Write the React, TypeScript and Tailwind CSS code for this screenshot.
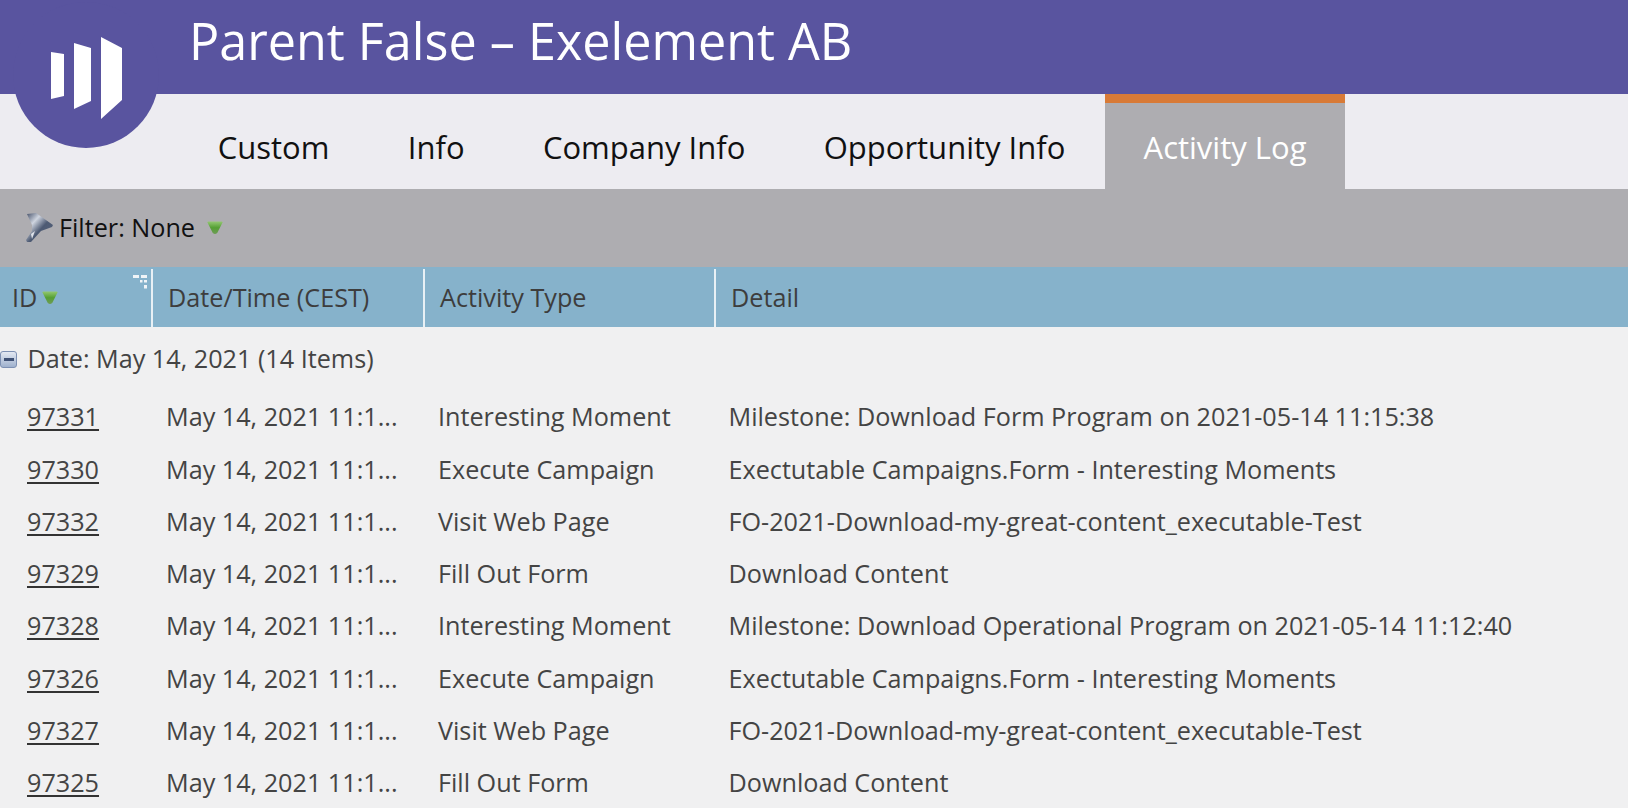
const FONT = "font-['Open_Sans','Noto_Sans',sans-serif]";

type Row = { id: string; type: string; detail: string };

const ROWS: Row[] = [
  { id: "97331", type: "Interesting Moment", detail: "Milestone: Download Form Program on 2021-05-14 11:15:38" },
  { id: "97330", type: "Execute Campaign", detail: "Exectutable Campaigns.Form - Interesting Moments" },
  { id: "97332", type: "Visit Web Page", detail: "FO-2021-Download-my-great-content_executable-Test" },
  { id: "97329", type: "Fill Out Form", detail: "Download Content" },
  { id: "97328", type: "Interesting Moment", detail: "Milestone: Download Operational Program on 2021-05-14 11:12:40" },
  { id: "97326", type: "Execute Campaign", detail: "Exectutable Campaigns.Form - Interesting Moments" },
  { id: "97327", type: "Visit Web Page", detail: "FO-2021-Download-my-great-content_executable-Test" },
  { id: "97325", type: "Fill Out Form", detail: "Download Content" },
];

const TABS = ["Custom", "Info", "Company Info", "Opportunity Info"];

function GreenArrow({ id }: { id: string }) {
  return (
    <svg width="16" height="14" viewBox="0 0 16 14">
      <defs>
        <linearGradient id={id} x1="0" y1="0" x2="0" y2="1">
          <stop offset="0" stopColor="#94c873" />
          <stop offset="0.5" stopColor="#549f33" />
          <stop offset="1" stopColor="#6f9c58" />
        </linearGradient>
      </defs>
      <path d="M0.500 1.500Q0.500 0.500 1.500 0.500H14.500Q15.500 0.500 15.500 1.500L10.500 11.500Q8 14.500 5.500 11.500z" fill={`url(#${id})`} />
    </svg>
  );
}

export default function App() {
  return (
    <div className={`${FONT} h-[808px] w-[1628px] overflow-hidden bg-[#f0f0f1]`}>
      {/* Header */}
      <div className="relative h-[94px] bg-[#59549f] pl-[189px]">
        <h1 className="pt-[5px] text-[50.3px] leading-[72px] text-white">Parent False – Exelement AB</h1>
        <div className="absolute left-[13px] top-[2px] h-[146px] w-[146px] rounded-full bg-[#59549f]">
          <svg className="absolute left-[38px] top-[35px]" width="72" height="83" viewBox="0 0 72 83">
            <path d="M0 15l13 2v42l-13 3z M23 6l17 5v53l-17 8z M50 0l21 11v52l-21 19z" fill="#fff" />
          </svg>
        </div>
      </div>

      {/* Tabs */}
      <div className="flex h-[95px] bg-[#edecf1] pl-[178.500px]">
        {TABS.map((t) => (
          <div key={t} className="flex items-center px-[39.200px] pt-[11px] text-[31px] text-[#111]">
            {t}
          </div>
        ))}
        <div className="flex items-center border-t-[9px] border-[#d87a37] bg-[#aeadb1] px-[39px] pt-[2px] text-[31px] text-white">
          Activity Log
        </div>
      </div>

      {/* Filter bar */}
      <div className="flex h-[78px] items-center bg-[#aeadb1] pl-[25px] text-[25.200px] text-[#111]">
        <svg width="30" height="32" viewBox="0 0 30 32">
          <defs>
            <linearGradient id="funnel" x1="0" y1="0" x2="1" y2="1">
              <stop offset="0" stopColor="#3f4a63" />
              <stop offset="0.3" stopColor="#cfd5e0" />
              <stop offset="0.55" stopColor="#4d5a73" />
              <stop offset="1" stopColor="#59657c" />
            </linearGradient>
          </defs>
          <path d="M2 2l9 -1 17 12 -1 2 -11 4 -10 11 -4 0 -1 -2 6 -9 0 -6z" fill="url(#funnel)" />
          <path d="M6 22l4 -3 -3 8z" fill="#dfe3ea" />
        </svg>
        <span className="ml-[4px]">Filter: None</span>
        <span className="ml-[12px] flex">
          <GreenArrow id="arrow-filter" />
        </span>
      </div>

      {/* Table header */}
      <div className="flex h-[60px] items-end bg-[#86b2cb] text-[25.200px] text-[#3d3d3d]">
        <div className="relative flex h-[58px] w-[153px] items-center border-r-2 border-[#e8f0f5] pl-[12px]">
          ID
          <span className="ml-[5px] flex">
            <GreenArrow id="arrow-id" />
          </span>
          <svg className="absolute left-[132px] top-[4px]" width="16" height="17" viewBox="0 0 16 17" fill="#f0f4f7">
            <path d="M1 2h6v3H1z M9 2h6v3H9z M8 7h2.500v2.500H8z M12 7h3v2.500h-3z M12 12h3v3.500h-3z" />
          </svg>
        </div>
        <div className="flex h-[58px] w-[271.500px] items-center border-r-2 border-[#e8f0f5] pl-[15px]">Date/Time (CEST)</div>
        <div className="flex h-[58px] w-[291px] items-center border-r-2 border-[#e8f0f5] pl-[15.500px]">Activity Type</div>
        <div className="flex h-[58px] items-center pl-[15.500px]">Detail</div>
      </div>

      {/* Group */}
      <div className="flex h-[64px] items-center text-[25.200px] text-[#444]">
        <span className="mr-[10.500px] flex h-[17px] w-[17px] items-center justify-center rounded-[3px] border border-[#7d90b3] bg-gradient-to-b from-[#e4e9f2] to-[#9fb1cd]">
          <span className="h-[3px] w-[10px] bg-[#3f5175]" />
        </span>
        Date: May 14, 2021 (14 Items)
      </div>

      {/* Rows */}
      {ROWS.map((r) => (
        <div key={r.id} className="flex h-[52.300px] items-center text-[25.200px] text-[#444]">
          <div className="w-[166px] pl-[27px] underline decoration-[#333] decoration-2 underline-offset-[3px]">{r.id}</div>
          <div className="w-[272px] whitespace-nowrap">May 14, 2021 11:1...</div>
          <div className="w-[290.500px]">{r.type}</div>
          <div className="whitespace-nowrap">{r.detail}</div>
        </div>
      ))}
    </div>
  );
}
